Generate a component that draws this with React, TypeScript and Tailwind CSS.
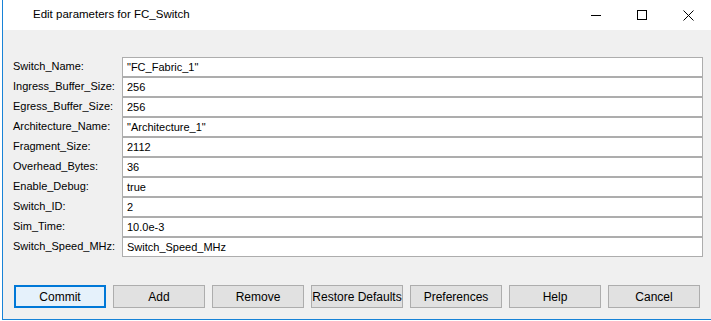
const params: [string, string][] = [
  ['Switch_Name:', '"FC_Fabric_1"'],
  ['Ingress_Buffer_Size:', '256'],
  ['Egress_Buffer_Size:', '256'],
  ['Architecture_Name:', '"Architecture_1"'],
  ['Fragment_Size:', '2112'],
  ['Overhead_Bytes:', '36'],
  ['Enable_Debug:', 'true'],
  ['Switch_ID:', '2'],
  ['Sim_Time:', '10.0e-3'],
  ['Switch_Speed_MHz:', 'Switch_Speed_MHz'],
];

const buttons = ['Commit', 'Add', 'Remove', 'Restore Defaults', 'Preferences', 'Help', 'Cancel'];

export default function App() {
  return (
    <div className="w-[711px] h-[321px] bg-white overflow-hidden font-['Liberation_Sans',Arial,sans-serif] text-[11px] text-black">
      <div className="ml-[2px] h-[320px] border-l border-b border-[#1883d7] flex flex-col">
        {/* title bar */}
        <div className="h-[30px] bg-white flex items-center shrink-0">
          <div className="w-[30px] h-full shrink-0" />
          <span className="text-[11.5px] text-black whitespace-nowrap">Edit parameters for FC_Switch</span>
          <div className="flex-1" />
          <div className="flex h-full">
            <div className="w-[46px] h-full flex items-center justify-center">
              <svg width="10" height="10" viewBox="0 0 10 10">
                <line x1="0" y1="5.5" x2="10" y2="5.5" stroke="#000" strokeWidth="1" />
              </svg>
            </div>
            <div className="w-[46px] h-full flex items-center justify-center">
              <svg width="10" height="10" viewBox="0 0 10 10">
                <rect x="0.5" y="0.5" width="9" height="9" fill="none" stroke="#000" strokeWidth="1" />
              </svg>
            </div>
            <div className="w-[46px] h-full flex items-center justify-center">
              <svg width="11" height="11" viewBox="0 0 11 11">
                <path d="M0.5 0.5 L10.5 10.5 M10.5 0.5 L0.5 10.5" stroke="#000" strokeWidth="1" />
              </svg>
            </div>
          </div>
        </div>

        {/* body */}
        <div className="flex-1 bg-[#f0f0f0] flex flex-col pl-[10px] pr-[8px] pt-[27px]">
          <div className="grid grid-cols-[109px_1fr]">
            {params.map(([label, value]) => (
              <div key={label} className="contents">
                <div className="h-[20px] flex items-center pb-[2px] whitespace-nowrap">{label}</div>
                <div className="h-[20px] bg-white border border-[#adadad] flex items-center pl-[4px] pt-[1px] whitespace-nowrap">
                  {value}
                </div>
              </div>
            ))}
          </div>

          <div className="mt-[28px] flex gap-[7px] pl-[1px]">
            {buttons.map((b) => (
              <button
                key={b}
                className={
                  b === 'Commit'
                    ? 'w-[92px] h-[23px] border-2 border-[#0078d7] bg-[#e5f1fb] text-[12px] flex items-center justify-center'
                    : 'w-[92px] h-[23px] border border-[#adadad] bg-[#e1e1e1] text-[12px] flex items-center justify-center'
                }
              >
                {b}
              </button>
            ))}
          </div>
        </div>
      </div>
    </div>
  );
}
